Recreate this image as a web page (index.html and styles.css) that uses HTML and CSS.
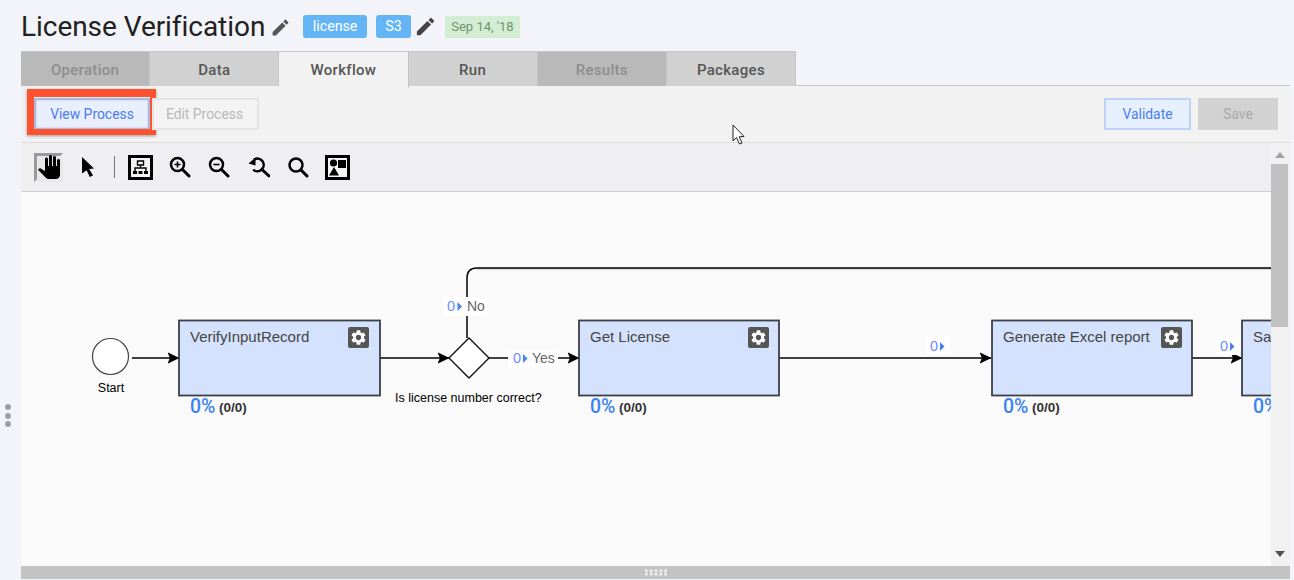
FILE: index.html
```html
<!DOCTYPE html>
<html lang="en">
<head>
    <meta charset="UTF-8">
    <title>License Verification</title>
    <link rel="stylesheet" href="styles.css">
</head>
<body>

    <svg class="defs" width="0" height="0">
        <symbol id="pencil" viewBox="0 0 24 24">
            <path d="M3 17.25V21h3.75L17.81 9.94l-3.75-3.75L3 17.25zM20.71 7.04c.39-.39.39-1.02 0-1.41l-2.34-2.34c-.39-.39-1.02-.39-1.41 0l-1.83 1.83 3.75 3.75 1.83-1.83z"/>
        </symbol>
        <symbol id="gear" viewBox="0 0 21 21">
            <rect width="21" height="21" rx="2" fill="#555"/>
            <g transform="translate(1.5 1.5) scale(.75)">
                <path fill="#fff" d="M19.14 12.94c.04-.3.06-.61.06-.94 0-.32-.02-.64-.07-.94l2.03-1.58c.18-.14.23-.41.12-.61l-1.92-3.32c-.12-.22-.37-.29-.59-.22l-2.39.96c-.5-.38-1.03-.7-1.62-.94l-.36-2.54c-.04-.24-.24-.41-.48-.41h-3.84c-.24 0-.43.17-.47.41l-.36 2.54c-.59.24-1.13.57-1.62.94l-2.39-.96c-.22-.08-.47 0-.59.22L2.74 8.87c-.12.21-.08.47.12.61l2.03 1.58c-.05.3-.09.63-.09.94s.02.64.07.94l-2.03 1.58c-.18.14-.23.41-.12.61l1.92 3.32c.12.22.37.29.59.22l2.39-.96c.5.38 1.03.7 1.62.94l.36 2.54c.05.24.24.41.48.41h3.84c.24 0 .44-.17.47-.41l.36-2.54c.59-.24 1.13-.56 1.62-.94l2.39.96c.22.08.47 0 .59-.22l1.92-3.32c.12-.22.07-.47-.12-.61l-2.01-1.58zM12 15.6c-1.98 0-3.6-1.62-3.6-3.6s1.62-3.6 3.6-3.6 3.6 1.62 3.6 3.6-1.62 3.6-3.6 3.6z"/>
            </g>
        </symbol>
        <marker id="head" viewBox="0 0 12 12" markerWidth="12" markerHeight="12" refX="11.5" refY="6" orient="auto" markerUnits="userSpaceOnUse">
            <path d="M0 0.2 L12 6 L0 11.8 L2.4 6 Z" fill="#000"/>
        </marker>
    </svg>

    <div class="side-grip"><i></i><i></i><i></i></div>

    <div class="page">
        <header class="title-bar">
            <h1>License Verification</h1>
            <svg class="pencil pencil-title"><use href="#pencil"/></svg>
            <span class="tag tag-first">license</span>
            <span class="tag">S3</span>
            <svg class="pencil pencil-tag"><use href="#pencil"/></svg>
            <span class="date">Sep 14, '18</span>
        </header>

        <nav class="tabs">
            <div class="tab disabled">Operation</div>
            <div class="tab">Data</div>
            <div class="tab active">Workflow</div>
            <div class="tab">Run</div>
            <div class="tab disabled">Results</div>
            <div class="tab">Packages</div>
        </nav>

        <section class="panel">
            <div class="action-bar">
                <button class="btn btn-view">View Process</button>
                <button class="btn btn-edit">Edit Process</button>
                <div class="spacer"></div>
                <button class="btn btn-validate">Validate</button>
                <button class="btn btn-save">Save</button>
                <!-- mouse pointer caught in the screenshot -->
                <svg class="mouse" width="14" height="22" viewBox="0 0 14 22">
                    <path d="M1 1 V17 L4.5 13.5 L7.5 20 L10 19 L7.2 12.8 L12 12.5 Z" fill="#fff" stroke="#222" stroke-width="1"/>
                </svg>
            </div>

            <div class="work-area">
                <div class="editor">
                    <div class="tool-bar">
                        <span class="tool">
                            <span class="tool-on">
                                <svg width="24" height="24" viewBox="0 0 24 24"><path d="M23 5.5V20c0 2.2-1.8 4-4 4h-7.3c-1.08 0-2.1-.43-2.85-1.19L1 14.83s1.26-1.23 1.3-1.25c.22-.19.49-.29.79-.29.22 0 .42.06.6.16.04.01 4.31 2.46 4.31 2.46V4c0-.83.67-1.5 1.5-1.5S11 3.17 11 4v7h1V1.5c0-.83.67-1.5 1.5-1.5S15 .67 15 1.5V11h1V2.5c0-.83.67-1.5 1.5-1.5s1.5.67 1.5 1.5V11h1V5.5c0-.83.67-1.5 1.5-1.5s1.5.67 1.5 1.5z"/></svg>
                            </span>
                        </span>
                        <span class="tool">
                            <svg width="14" height="20" viewBox="0 0 14 20"><path d="M1 0 L13 11.5 L8.2 12 L12 18.5 L8.8 20 L5.6 13.2 L1 16.5 Z"/></svg>
                        </span>
                        <span class="tool-sep"></span>
                        <span class="tool">
                            <svg width="25" height="25" viewBox="0 0 25 25">
                                <rect x="1.5" y="1.5" width="22" height="22" fill="#f4f4f4" stroke="#000" stroke-width="3"/>
                                <path d="M9.5 6h6v4h-6zM12.5 10v3M7 16v-3h11v3" fill="none" stroke="#000" stroke-width="1.4"/>
                                <path d="M5 16h4v3h-4zM10.5 16h4v3h-4zM16 16h4v3h-4z"/>
                            </svg>
                        </span>
                        <span class="tool">
                            <svg width="22" height="22" viewBox="0 0 22 22" class="glass">
                                <circle cx="8.5" cy="8.5" r="6.5"/><path d="M13.5 13.5 L20 20" class="handle"/><path d="M5.5 8.5h6M8.5 5.5v6" class="thin"/>
                            </svg>
                        </span>
                        <span class="tool">
                            <svg width="22" height="22" viewBox="0 0 22 22" class="glass">
                                <circle cx="8.5" cy="8.5" r="6.5"/><path d="M13.5 13.5 L20 20" class="handle"/><path d="M5.5 8.5h6" class="thin"/>
                            </svg>
                        </span>
                        <span class="tool">
                            <svg width="22" height="22" viewBox="0 0 22 22" class="glass">
                                <path d="M6 3.6 A6.3 6.3 0 1 1 5.2 13.6"/><path d="M0.5 7.5 L7.5 1.5 L7.5 9.5 Z" class="solid"/><path d="M14.5 14 L21 20" class="handle"/>
                            </svg>
                        </span>
                        <span class="tool">
                            <svg width="22" height="22" viewBox="0 0 22 22" class="glass">
                                <circle cx="9" cy="9" r="6.5"/><path d="M14 14 L20 20" class="handle"/>
                            </svg>
                        </span>
                        <span class="tool">
                            <svg width="25" height="25" viewBox="0 0 25 25">
                                <rect x="1.5" y="1.5" width="22" height="22" fill="#f4f4f4" stroke="#000" stroke-width="3"/>
                                <circle cx="8.5" cy="8" r="3.6"/><rect x="13" y="5" width="8" height="8"/><path d="M9 12 L14 20.5 H4 Z"/>
                            </svg>
                        </span>
                    </div>

                    <svg class="diagram" viewBox="21 192 1250 374" preserveAspectRatio="xMinYMin meet">
                        <!-- connectors -->
                        <path class="edge-shadow" d="M477 269 H1271"/>
                        <path class="edge" d="M467 338 V278 Q467 268 477 268 H1271"/>
                        <path class="edge" d="M132 358 H179" marker-end="url(#head)"/>
                        <path class="edge" d="M380 358 H449" marker-end="url(#head)"/>
                        <path class="edge" d="M489 358 H579" marker-end="url(#head)"/>
                        <path class="edge" d="M779 358 H991" marker-end="url(#head)"/>
                        <path class="edge" d="M1192 358 H1242" marker-end="url(#head)"/>

                        <!-- start and gateway -->
                        <circle class="start" cx="110.5" cy="356.5" r="18"/>
                        <text class="small" x="111" y="392" text-anchor="middle">Start</text>
                        <path class="gateway" d="M469 338 L489 358 L469 378 L449 358 Z"/>
                        <text class="small" x="395" y="402">Is license number correct?</text>

                        <!-- edge labels -->
                        <rect class="label-bg" x="443" y="297" width="44" height="19"/>
                        <text class="count" x="447" y="311">0</text>
                        <path class="count-arrow" d="M457.5 302 L462 306.5 L457.5 311 Z"/>
                        <text class="edge-text" x="467" y="311">No</text>

                        <rect class="label-bg" x="508" y="350" width="50" height="18"/>
                        <text class="count" x="513" y="363">0</text>
                        <path class="count-arrow" d="M523 354 L527.5 358.5 L523 363 Z"/>
                        <text class="edge-text" x="532" y="363">Yes</text>

                        <rect class="label-bg" x="926" y="337" width="24" height="18"/>
                        <text class="count" x="930" y="351">0</text>
                        <path class="count-arrow" d="M940 342 L944.5 346.5 L940 351 Z"/>

                        <rect class="label-bg" x="1216" y="337" width="24" height="18"/>
                        <text class="count" x="1220" y="351">0</text>
                        <path class="count-arrow" d="M1230 342 L1234.5 346.5 L1230 351 Z"/>

                        <!-- tasks -->
                        <rect class="task" x="179" y="320.5" width="201" height="75"/>
                        <text class="task-name" x="190" y="342">VerifyInputRecord</text>
                        <use href="#gear" x="348" y="327" width="21" height="21"/>
                        <text class="percent" x="190" y="413">0%</text>
                        <text class="ratio" x="219" y="412">(0/0)</text>

                        <rect class="task" x="579" y="320.5" width="200" height="75"/>
                        <text class="task-name" x="590" y="342">Get License</text>
                        <use href="#gear" x="748" y="327" width="21" height="21"/>
                        <text class="percent" x="590" y="413">0%</text>
                        <text class="ratio" x="619" y="412">(0/0)</text>

                        <rect class="task" x="992" y="320.5" width="200" height="75"/>
                        <text class="task-name" x="1003" y="342">Generate Excel report</text>
                        <use href="#gear" x="1161" y="327" width="21" height="21"/>
                        <text class="percent" x="1003" y="413">0%</text>
                        <text class="ratio" x="1032" y="412">(0/0)</text>

                        <rect class="task" x="1242" y="320.5" width="200" height="75"/>
                        <text class="task-name" x="1253" y="342">Save</text>
                        <text class="percent" x="1253" y="413">0%</text>
                    </svg>
                </div>

                <div class="scrollbar">
                    <span class="arrow-up"></span>
                    <div class="thumb"></div>
                    <div class="spacer"></div>
                    <span class="arrow-down"></span>
                </div>
            </div>

            <div class="splitter"><span class="splitter-grip"></span></div>
        </section>
    </div>

</body>
</html>
```

FILE: styles.css
```css
body {
    margin: 0;
    height: 580px;
    overflow: hidden;
    background-color: #f3f4f9;
    font-family: 'Roboto', 'Liberation Sans', sans-serif;
    position: relative;
}
.defs {
    position: absolute;
}
.page {
    margin: 0 4px 0 21px;
}
.spacer {
    flex: 1;
}

/* drag handle on the left edge */
.side-grip {
    position: absolute;
    left: 5px;
    top: 404px;
    display: flex;
    flex-direction: column;
    gap: 2.5px;
}
.side-grip i {
    width: 6px;
    height: 6px;
    border-radius: 50%;
    background-color: #a0a0a0;
}

/* title */
.title-bar {
    height: 51px;
    box-sizing: border-box;
    padding-top: 1px;
    display: flex;
    align-items: center;
}
h1 {
    margin: 0;
    font-size: 28px;
    font-weight: 400;
    letter-spacing: -.05px;
    color: #212121;
}
.pencil {
    fill: #555;
}
.pencil-title {
    width: 21px;
    height: 21px;
    margin: 2px 0 0 5px;
}
.pencil-tag {
    width: 23px;
    height: 23px;
    margin: 0 0 0 3px;
    fill: #444;
}
.tag {
    height: 23px;
    line-height: 22px;
    padding: 0 9.5px;
    border-radius: 3px;
    background-color: #64b5f6;
    color: #fff;
    font-size: 14.2px;
    margin-left: 9px;
}
.tag-first {
    margin-left: 12px;
}
.date {
    height: 22px;
    line-height: 22px;
    margin: 1px 0 0 7.5px;
    padding: 0 6.5px;
    background-color: #d2edd2;
    color: #70946f;
    font-size: 13px;
}

/* tabs */
.tabs {
    display: grid;
    grid-template-columns: repeat(6, 1fr);
    width: 775px;
    height: 34px;
    position: relative;
    z-index: 1;
}
.tab {
    line-height: 37px;
    text-align: center;
    font-size: 15px;
    font-weight: 500;
    letter-spacing: .3px;
    color: #565656;
    background-color: #d1d1d1;
    border-top: 1px solid #c6c6c6;
    border-right: 1px solid #c6c6c6;
    height: 34px;
}
.tab.disabled {
    background-color: #b9b9b9;
    color: #8d8d8d;
}
.tab.active {
    background-color: #f2f2f2;
    height: 36px;
}

/* panel */
.panel {
    border-top: 1px solid #c6c6c6;
    background-color: #f2f2f2;
}
.action-bar {
    height: 57px;
    box-sizing: border-box;
    padding: 12px 12px 12px 13px;
    display: flex;
    align-items: flex-start;
    border-bottom: 1px solid #dcdcdc;
    position: relative;
}
.btn {
    height: 32px;
    box-sizing: border-box;
    border: 2px solid transparent;
    padding: 0;
    font-family: inherit;
    font-size: 13.9px;
    position: relative;
}
.btn-view {
    width: 116px;
    background-color: #e9effd;
    color: #4a7cf0;
    border-color: #a9bbdc;
    box-shadow: inset 0 0 2px #a9bbdc;
}
/* the red mark drawn on the screenshot */
.btn-view::after {
    content: "";
    position: absolute;
    top: -11px;
    left: -9px;
    right: -8px;
    bottom: -7px;
    border-style: solid;
    border-width: 8px 6px 6px 7px;
    border-color: #ff5230;
    box-shadow: 0 1px 3px rgba(0, 0, 0, 0.35);
}
.btn-edit {
    width: 107px;
    margin-left: 2px;
    padding-right: 2px;
    background-color: #f3f3f3;
    border-color: #e4e4e4;
    color: #b9b9b9;
}
.btn-validate {
    width: 87px;
    background-color: #e6f0ff;
    border-color: #bcd3f7;
    color: #4a80f0;
}
.btn-save {
    width: 80px;
    margin-left: 7px;
    background-color: #d2d2d2;
    color: #a8a8a8;
}
.mouse {
    position: absolute;
    left: 711px;
    top: 38px;
}

/* editor */
.work-area {
    display: flex;
    height: 423px;
}
.editor {
    flex: 1;
    min-width: 0;
    display: flex;
    flex-direction: column;
}
.tool-bar {
    height: 49px;
    flex: none;
    box-sizing: border-box;
    padding-left: 8px;
    display: flex;
    align-items: center;
    background-color: #efeff1;
    border-bottom: 1px solid #d0d0d0;
}
.tool {
    width: 39.5px;
    height: 30px;
    display: flex;
    align-items: center;
    justify-content: center;
}
.tool-on {
    width: 29px;
    height: 29px;
    box-sizing: border-box;
    border: 3px solid;
    border-color: #999 #e8e8e8 #e8e8e8 #999;
    background-color: #e8e8e8;
    display: flex;
    align-items: center;
    justify-content: center;
}
.tool-on svg {
    flex: none;
}
.tool-sep {
    width: 1px;
    height: 22px;
    margin: 0 6px 0 5.5px;
    background-color: #777;
}
.glass * {
    fill: none;
    stroke: #000;
    stroke-width: 2.5;
}
.glass .handle {
    stroke-width: 3;
    stroke-linecap: round;
}
.glass .thin {
    stroke-width: 1.6;
}
.glass .solid {
    fill: #000;
    stroke: none;
}
.diagram {
    display: block;
    width: 100%;
    height: 374px;
    flex: none;
    background-color: #fafafa;
    font-family: 'Liberation Sans', Arial, sans-serif;
}
.edge {
    fill: none;
    stroke: #000;
    stroke-width: 1.5;
}
.edge-shadow {
    fill: none;
    stroke: #b5b5b5;
    stroke-width: 1;
}
.start {
    fill: #fff;
    stroke: #444;
    stroke-width: 1.2;
}
.gateway {
    fill: #fff;
    stroke: #111;
    stroke-width: 1.4;
}
.small {
    font-size: 12.5px;
    fill: #000;
}
.label-bg {
    fill: #fff;
}
.count {
    font-size: 14.5px;
    fill: #6f8cf5;
}
.count-arrow {
    fill: #4a80f0;
}
.edge-text {
    font-size: 14px;
    fill: #666;
}
.task {
    fill: #d5e2fd;
    stroke: #3b3f48;
    stroke-width: 1.8;
}
.task-name {
    font-size: 15px;
    fill: #444;
}
.percent {
    font-size: 19.5px;
    font-weight: 500;
    fill: #3c83f2;
    font-family: 'Roboto', sans-serif;
}
.ratio {
    font-size: 13.5px;
    font-weight: bold;
    fill: #333;
}

/* scrollbar */
.scrollbar {
    width: 19px;
    box-sizing: border-box;
    padding-right: 2px;
    display: flex;
    flex-direction: column;
    align-items: center;
    background-color: #f1f1f1;
}
.arrow-up {
    margin-top: 9px;
    border: 5px solid transparent;
    border-top: 0;
    border-bottom: 6px solid #a3a3a3;
}
.thumb {
    width: 17px;
    height: 163px;
    margin-top: 6px;
    background-color: #c1c1c1;
}
.arrow-down {
    margin-bottom: 9px;
    border: 5px solid transparent;
    border-bottom: 0;
    border-top: 6px solid #505050;
}

/* bottom splitter */
.splitter {
    height: 13px;
    background-color: #c3c3c3;
    display: flex;
    align-items: center;
    justify-content: center;
}
.splitter-grip {
    width: 24px;
    height: 7px;
    background-image: radial-gradient(circle, #f0f0f0 1.2px, transparent 1.7px);
    background-size: 4.8px 3.5px;
}
```
